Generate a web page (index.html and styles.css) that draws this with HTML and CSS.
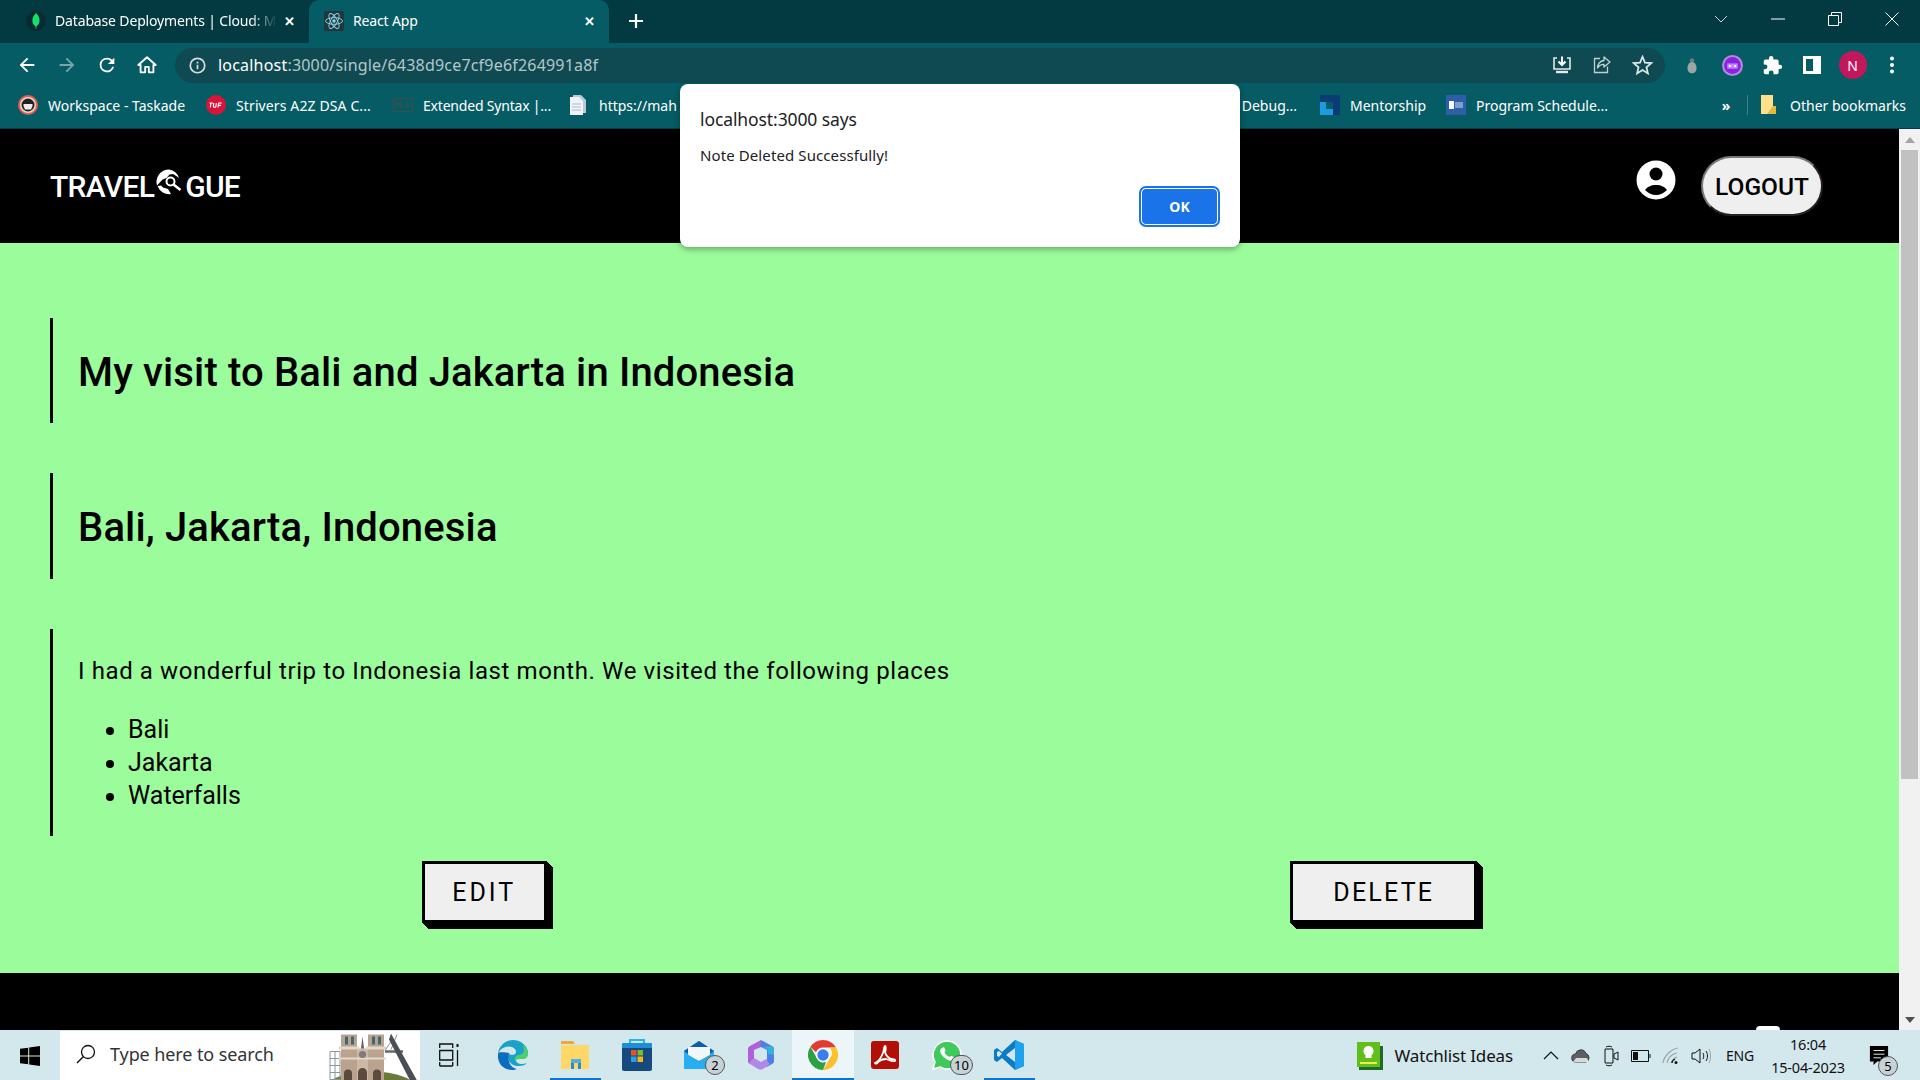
FILE: index.html
```html
<!DOCTYPE html>
<html lang="en">
<head>
<meta charset="utf-8">
<title>React App</title>
<link rel="stylesheet" href="styles.css">
</head>
<body>
<div class="screen">
  <header class="chrome">
    <div class="tabstrip">
      <div class="tab">
        <svg class="fav" viewBox="0 0 20 20"><circle cx="10" cy="10" r="10" fill="#0b2a33"/><path d="M10 2c3 3 4 6 3.400 9-.4 2-1.600 3.400-3 4.500l-.2 2.500h-.5l-.2-2.500C8 14.400 6.900 13 6.500 11 6 8 7 5 10 2z" fill="#13e26a"/></svg>
        <span class="tab-title tab-title-fade">Database Deployments | Cloud: M</span>
        <span class="tab-x">✕</span>
      </div>
      <div class="tab tab-active">
        <svg class="fav" viewBox="0 0 20 20"><rect width="20" height="20" rx="2" fill="#20373d"/><g fill="none" stroke="#8fd8ec" stroke-width=".9"><ellipse cx="10" cy="10" rx="8.500" ry="3.300"/><ellipse cx="10" cy="10" rx="8.500" ry="3.300" transform="rotate(60 10 10)"/><ellipse cx="10" cy="10" rx="8.500" ry="3.300" transform="rotate(120 10 10)"/></g><circle cx="10" cy="10" r="1.700" fill="#8fd8ec"/></svg>
        <span class="tab-title">React App</span>
        <span class="tab-x">✕</span>
      </div>
      <div class="newtab">
        <svg viewBox="0 0 16 16" width="16" height="16"><path d="M8 1v14M1 8h14" stroke="#fff" stroke-width="2.200"/></svg>
      </div>
      <div class="wincontrols">
        <span class="winbtn"><svg viewBox="0 0 14 8" width="14" height="8"><path d="M1 1l6 6 6-6" fill="none" stroke="#c9d6d8" stroke-width="1"/></svg></span>
        <span class="winbtn"><svg viewBox="0 0 14 2" width="14" height="2"><path d="M0 1h14" stroke="#fff" stroke-width="1"/></svg></span>
        <span class="winbtn"><svg viewBox="0 0 14 14" width="14" height="14"><path d="M.5 3.500h10v10H.5zM3.500 3.500v-3h10v10h-3" fill="none" stroke="#fff" stroke-width="1"/></svg></span>
        <span class="winbtn"><svg viewBox="0 0 14 14" width="14" height="14"><path d="M.5.500l13 13M13.500.500l-13 13" stroke="#fff" stroke-width="1"/></svg></span>
      </div>
    </div>
    <div class="toolbar">
      <span class="navbtn"><svg viewBox="0 0 24 24" width="22" height="22"><path d="M20 11H7.800l5.600-5.600L12 4l-8 8 8 8 1.400-1.400L7.800 13H20z" fill="#fff"/></svg></span>
      <span class="navbtn"><svg viewBox="0 0 24 24" width="22" height="22"><path d="M4 11h12.200l-5.600-5.600L12 4l8 8-8 8-1.400-1.400 5.600-5.600H4z" fill="#7fa4a8"/></svg></span>
      <span class="navbtn"><svg viewBox="0 0 24 24" width="22" height="22"><path d="M17.650 6.350A7.960 7.960 0 0 0 12 4a8 8 0 1 0 7.730 10h-2.080A6 6 0 1 1 12 6c1.660 0 3.140.690 4.220 1.780L13 11h7V4z" fill="#fff"/></svg></span>
      <span class="navbtn"><svg viewBox="0 0 24 24" width="22" height="22"><path d="M10 20v-6h4v6h5v-8h2.500L12 3.500 2.500 12H5v8z" fill="none" stroke="#fff" stroke-width="2" stroke-linejoin="round"/></svg></span>
      <div class="omnibox">
        <svg class="omni-info" viewBox="0 0 20 20" width="17" height="17"><circle cx="10" cy="10" r="8.500" fill="none" stroke="#d4dfe0" stroke-width="2"/><path d="M10 9v5.500M10 5.500v2" stroke="#d4dfe0" stroke-width="2"/></svg>
        <span class="url"><span class="url-host">localhost</span>:3000/single/6438d9ce7cf9e6f264991a8f</span>
        <span class="omni-right">
          <span class="omni-btn"><svg viewBox="0 0 20 20" width="20" height="20"><path d="M5 3H2v11h16V3h-3" fill="none" stroke="#e3e9ea" stroke-width="1.600"/><path d="M10 1.500v8M6.500 6.500l3.500 3.500 3.500-3.500" fill="none" stroke="#fff" stroke-width="2"/><path d="M4 17h12" stroke="#e3e9ea" stroke-width="2.400"/></svg></span>
          <span class="omni-btn"><svg viewBox="0 0 20 20" width="20" height="20"><path d="M8 3.500H2.500v14h13v-6" fill="none" stroke="#c3d0d2" stroke-width="1.300"/><path d="M12 2l6 5-6 5V9.300C9 9.300 7 10.500 5.500 13c.3-4 2.500-7 6.500-7.500z" fill="none" stroke="#c3d0d2" stroke-width="1.300" stroke-linejoin="round"/></svg></span>
          <span class="omni-btn"><svg viewBox="0 0 24 24" width="21" height="21"><path d="M12 17.270 18.180 21l-1.640-7.030L22 9.240l-7.190-.610L12 2 9.190 8.630 2 9.240l5.460 4.730L5.820 21z" fill="none" stroke="#dfe7e8" stroke-width="2"/></svg></span>
        </span>
      </div>
      <span class="extbtn"><svg viewBox="0 0 16 24" width="12" height="20"><circle cx="8" cy="6" r="3" fill="#6b7f80"/><path d="M8 8c4 0 6 4 6 8s-2 7-6 7-6-3-6-7 2-8 6-8z" fill="#9aa5a5"/></svg></span>
      <span class="extbtn"><svg viewBox="0 0 20 20" width="21" height="21"><circle cx="10" cy="10" r="10" fill="#b68cd8"/><circle cx="10" cy="10" r="8" fill="#8a22e0"/><path d="M5 8h10v5H5z" fill="#b98cf0"/><circle cx="7.500" cy="10.500" r="1" fill="#fff"/><circle cx="12.500" cy="10.500" r="1" fill="#fff"/></svg></span>
      <span class="extbtn"><svg viewBox="0 0 24 24" width="21" height="21"><path d="M20.500 11H19V7a2 2 0 0 0-2-2h-4V3.500a2.500 2.500 0 0 0-5 0V5H4a2 2 0 0 0-2 2v3.800h1.500a2.700 2.700 0 0 1 0 5.400H2V20a2 2 0 0 0 2 2h3.800v-1.500a2.700 2.700 0 0 1 5.400 0V22H17a2 2 0 0 0 2-2v-4h1.500a2.500 2.500 0 0 0 0-5z" fill="#fff"/></svg></span>
      <span class="extbtn"><svg viewBox="0 0 18 18" width="18" height="18"><path d="M0 0h18v18H0zM3 3v12h7V3z" fill="#fff" fill-rule="evenodd"/></svg></span>
      <span class="extbtn"><span class="profile">N</span></span>
      <span class="extbtn"><svg viewBox="0 0 4 18" width="4" height="18"><circle cx="2" cy="2.500" r="2" fill="#fff"/><circle cx="2" cy="9" r="2" fill="#fff"/><circle cx="2" cy="15.500" r="2" fill="#fff"/></svg></span>
    </div>
    <nav class="bookmarks">
      <a class="bm bm-1"><svg viewBox="0 0 20 20" width="20" height="20"><circle cx="10" cy="10" r="10" fill="#e85a5a"/><circle cx="10" cy="10" r="8" fill="#e8e0c8"/><circle cx="10" cy="10" r="6.500" fill="#222"/><path d="M5.500 9h9v2l-1.500 3.500h-6L5.500 11z" fill="#eee"/></svg><span>Workspace - Taskade</span></a>
      <a class="bm bm-2"><svg viewBox="0 0 20 20" width="20" height="20"><circle cx="10" cy="10" r="10" fill="#d8143a"/><path d="M3.500 8h3.300M5 8l-.7 4.500M7.800 8l-.4 3c0 1.800 2.400 1.800 2.600 0l.4-3M12 12.500l.7-4.500h3M12.400 10.300h2.600" stroke="#fff" stroke-width="1.200" fill="none"/></svg><span>Strivers A2Z DSA C...</span></a>
      <a class="bm bm-3"><svg viewBox="0 0 20 14" width="20" height="14"><rect x=".5" y=".5" width="19" height="13" fill="none" stroke="#3b4e50"/><path d="M3 10.500v-7l2.500 3 2.500-3v7M14 3.500v6M11.500 7.500l2.500 2.500 2.500-2.500" fill="none" stroke="#3b4e50" stroke-width="1.200"/></svg><span>Extended Syntax |...</span></a>
      <a class="bm bm-4"><svg viewBox="0 0 18 20" width="18" height="20"><path d="M4 0h8l5 5v13H4z" fill="#b8c9da"/><path d="M1 2h9l4 4v14H1z" fill="#f0f4f8"/><path d="M3 9h9M3 12h9M3 15h9" stroke="#a9bccd"/></svg><span class="bm-clip">https://maha</span></a>
      <a class="bm bm-5"><span>Debug...</span></a>
      <a class="bm bm-6"><svg viewBox="0 0 20 20" width="20" height="20"><path d="M0 0h20v20h-20z" fill="#0b3d74"/><path d="M0 7h13v13H0z" fill="#1b9ce0"/><path d="M6 7h7v7H6z" fill="#065c64"/></svg><span>Mentorship</span></a>
      <a class="bm bm-7"><svg viewBox="0 0 20 20" width="20" height="20"><rect width="20" height="20" fill="#2c5fa8"/><rect x="3" y="6" width="5" height="8" fill="#fff"/><path d="M9 8h8M9 10h8M9 12h8" stroke="#cfe0f4"/></svg><span>Program Schedule...</span></a>
      <span class="bm-more">»</span>
      <span class="bm-sep"></span>
      <a class="bm bm-8"><svg viewBox="0 0 16 20" width="16" height="20"><path d="M0 0h12v19H0z" fill="#ffe08a"/><path d="M12 11l3 0v8H6z" fill="#e5b93f"/></svg><span>Other bookmarks</span></a>
    </nav>
  </header>

  <div class="viewport">
    <main class="page">
      <div class="topnav">
        <div class="logo">
          <span>TRAVEL</span>
          <svg class="logo-mark" viewBox="0 0 26 26" width="26" height="26"><path d="M13 .500a12.500 12.500 0 0 0-12 16l5.500-6 4-1.500 3-3.500 3.500-.5 4 2.500 2 1.500A12.500 12.500 0 0 0 13 .500z" fill="#fff"/><path d="M1.500 17A12.500 12.500 0 0 0 15 25l-3-5-5-1.500-2-2z" fill="#fff"/><circle cx="14.500" cy="12.500" r="4" fill="none" stroke="#fff" stroke-width="2"/><path d="M17.500 15.500l7 5.500" stroke="#fff" stroke-width="2.600"/></svg>
          <span>GUE</span>
        </div>
        <div class="nav-right">
          <svg class="user" viewBox="0 0 40 40" width="40" height="40"><circle cx="20" cy="20" r="19.500" fill="#fff"/><circle cx="20" cy="14" r="6.500" fill="#000"/><path d="M9 30c2-3 6-5 11-5s9 2 11 5c-3 3-7 5-11 5s-8-2-11-5z" fill="#000"/></svg>
          <button class="logout">LOGOUT</button>
        </div>
      </div>
      <div class="content">
        <section class="block block-head"><h1>My visit to Bali and Jakarta in Indonesia</h1></section>
        <section class="block block-head"><h1>Bali, Jakarta, Indonesia</h1></section>
        <section class="block block-body">
          <p>I had a wonderful trip to Indonesia last month. We visited the following places</p>
          <ul>
            <li>Bali</li>
            <li>Jakarta</li>
            <li>Waterfalls</li>
          </ul>
        </section>
        <div class="actions">
          <button class="action action-edit">EDIT</button>
          <button class="action action-delete">DELETE</button>
        </div>
      </div>
      <footer class="foot"></footer>
    </main>
    <aside class="scrollbar">
      <span class="sb-arrow"><svg viewBox="0 0 10 6" width="10" height="6"><path d="M5 0l5 6H0z" fill="#a3a3a3"/></svg></span>
      <span class="sb-thumb"></span>
      <span class="sb-rest"></span>
      <span class="sb-arrow"><svg viewBox="0 0 10 6" width="10" height="6"><path d="M5 6l5-6H0z" fill="#505050"/></svg></span>
    </aside>
  </div>

  <footer class="taskbar">
    <span class="start"><svg viewBox="0 0 20 20" width="20" height="20"><path d="M0 2.800 8.200 1.700v7.800H0zM9.200 1.500 20 0v9.500H9.200zM0 10.500h8.200v7.800L0 17.200zM9.200 10.500H20V20L9.200 18.500z" fill="#000"/></svg></span>
    <div class="search">
      <svg class="search-ico" viewBox="0 0 20 20" width="20" height="20"><circle cx="12" cy="8" r="6.500" fill="none" stroke="#111" stroke-width="1.300"/><path d="M7.500 12.500 1 19" stroke="#111" stroke-width="1.500"/></svg>
      <span class="search-text">Type here to search</span>
      <svg class="search-art" viewBox="0 0 93 48" width="93" height="49">
        <ellipse cx="46" cy="58" rx="46" ry="18" fill="#6a7a3a"/>
        <g fill="none" stroke="#8a9499"><path d="M5 20h10v28H5zM5 27h10M5 34h10M5 41h10M10 20v28"/></g>
        <path d="M16 3h16v46H16zM43 3h16v46H43z" fill="#b9a38f"/>
        <path d="M32 17h11v32H32z" fill="#cbb9a6"/>
        <path d="M37.500 5 36 17h3z" fill="#6e5a4c"/>
        <path d="M14 15h20v3H14zM41 15h20v3H41zM14 26h47v2H14z" fill="#e3d8ca"/>
        <path d="M20 5h3v8h-3zM26 5h3v8h-3zM47 5h3v8h-3zM53 5h3v8h-3z" fill="#3d6a72"/>
        <circle cx="37.500" cy="23" r="3.600" fill="#7f7a80"/>
        <path d="M19 49v-7a4 4 0 0 1 8 0v7zM33 49v-8a4.500 4.500 0 0 1 9 0v8zM48 49v-7a4 4 0 0 1 8 0v7z" fill="#5b4a3e"/>
        <path d="M60 20h18" stroke="#666" stroke-width="2.500"/>
        <path d="M66 18 72 3" stroke="#8a9094" stroke-width="1" fill="none"/>
        <path d="M60 19 66 10" stroke="#8a9094" stroke-width="1"/>
        <path d="M66 2 92 49h-7L64 8z" fill="#4a4f55"/>
      </svg>
    </div>
    <div class="apps">
      <span class="app app-task"><svg viewBox="0 0 20 24" width="20" height="24"><g fill="none" stroke="#111" stroke-width="1.300"><path d="M.7 5V1h13v4M.7 19v4M13.700 19v4M.7 23h13"/><path d="M.7 7.500h13v9.500H.7z"/><path d="M18.500 7v16"/></g><path d="M17.500 1h2v3h-2z" fill="#111"/></svg></span>
      <span class="app"><svg viewBox="0 0 30 30" width="30" height="30"><path d="M15 0C7 0 .5 6.500 0 14c2-6 9-9 14-7 4 1.500 5 5 3 7-2 1.500-6 1-6-1-3 6 1 12 8 13 5 .5 8-1 10-3-5 2-11 1-11-3 0-2 3-2 7-2 3 0 5-2 5-5C30 6 23 0 15 0z" fill="#1ba3c7"/><path d="M0 14c-1 9 5 16 14 16 2 0 4-.5 5-1-6-1-10-7-8-16-1 0-11-2-11 1z" fill="#0c6cbe"/><path d="M25 4c3 3 5 7 5 10 0 3-2 5-5 5-4 0-7 0-7 2 0 1 .5 2 2 2-5-2-3-8 1-8 3-.500 5-2 5-5 0-2-1-4-1-6z" fill="#4bd16b"/></svg></span>
      <span class="app app-line"><svg viewBox="0 0 28 28" width="28" height="28"><path d="M0 0h12l2 3H0z" fill="#f0a63a"/><path d="M0 4h28v24H0z" fill="#ffd668"/><path d="M10 28V18h10v10h-3v-6h-4v6z" fill="#2a8ad0"/><path d="M10 18h10v4H10z" fill="#4fb0e8"/></svg></span>
      <span class="app"><svg viewBox="0 0 30 32" width="30" height="32"><path d="M8 4V1h14v3" fill="none" stroke="#23b8ea" stroke-width="2"/><path d="M0 6a2 2 0 0 1 2-2h26a2 2 0 0 1 2 2v24a2 2 0 0 1-2 2H2a2 2 0 0 1-2-2z" fill="#164a7e"/><path d="M0 6a2 2 0 0 1 2-2h26a2 2 0 0 1 2 2v3H0z" fill="#1d8fd6"/><path d="M9 11h5.500v5.500H9z" fill="#e8502c"/><path d="M15.500 11H21v5.500h-5.500z" fill="#7cbb2e"/><path d="M9 17.500h5.500V23H9z" fill="#2a9fe6"/><path d="M15.500 17.500H21V23h-5.500z" fill="#fcb712"/></svg></span>
      <span class="app"><svg viewBox="0 0 30 28" width="30" height="28"><path d="M0 10 15 0l15 10v18H0z" fill="#20a5ea"/><path d="M0 10 15 0l15 10-15 10z" fill="#0a5fa6"/><path d="M4 6h22v8l-11 6-11-6z" fill="#f2f6f8"/><path d="M0 11l15 10 15-10v17H0z" fill="#28aef0"/></svg><span class="pill pill-mail">2</span></span>
      <span class="app"><svg viewBox="0 0 26 30" width="26" height="30"><path d="M13 0l11 6c2 1 2 2 2 4v10c0 2 0 3-2 4l-5 3-3-4 3-3V10l-6-3-3-3z" fill="#4a80e8"/><path d="M13 0 2 6C0 7 0 8 0 10v10c0 2 0 3 2 4l3-2 1-4V10l7-3z" fill="#b060d8"/><path d="M6 18l7 4 5-3 3 4c1 1 1 1 0 2l-6 4c-2 1-3 1-5 0L2 24c-2-1 4-6 4-6z" fill="#b088e8"/><path d="M15 7l9-1c2 1 2 2 2 4v5l-6-1V10z" fill="#38b0d8"/></svg></span>
      <span class="app app-chrome"><svg viewBox="0 0 30 30" width="30" height="30"><path d="M15 0a15 15 0 0 1 13 7.500H15a7.500 7.500 0 0 0-7 4.700L2.500 6.800A15 15 0 0 1 15 0z" fill="#e33b2e"/><path d="M28 7.500A15 15 0 0 1 15 30l6.500-11.300a7.500 7.500 0 0 0 .2-11.200z" fill="#fbc02d"/><path d="M15 30A15 15 0 0 1 2.500 6.800L9 18.500a7.500 7.500 0 0 0 9 3.500L15 30z" fill="#2ea043"/><circle cx="15" cy="15" r="7" fill="#fff"/><circle cx="15" cy="15" r="5.700" fill="#3a7ff0"/></svg></span>
      <span class="app"><svg viewBox="0 0 28 28" width="28" height="28"><rect width="28" height="28" rx="3" fill="#b20f06"/><path d="M4 22c3-1 6-5 8-10 1-3 1-7 2-7s1 4 0 6c1 4 4 6 6 7 2 0 5 0 4 2-2 1-6-1-9-2-4 0-7 2-8 3-1 2-3 2-3 1z" fill="none" stroke="#fff" stroke-width="1.800"/></svg></span>
      <span class="app"><svg viewBox="0 0 30 30" width="30" height="30"><path d="M15 1a14 14 0 0 1 0 28c-2.500 0-5-.700-7-2L1 29l2-7A14 14 0 0 1 15 1z" fill="#3ecb5c" stroke="#fff" stroke-width="1.500"/><path d="M10 8c1-1 2-1 2.500 0l1 2.500c0 1-1 1.500-1 2 1 2 3 3.500 5 4.500.5 0 1-1 2-1l2.500 1c1 .500 1 1.500 0 2.500-1.500 1.500-3.500 1.500-6 .5-4-2-7-5-8-8.500 0-1.500.500-2.500 2-3.500z" fill="#fff"/></svg><span class="pill pill-wa">10</span></span>
      <span class="app app-line"><svg viewBox="0 0 30 30" width="30" height="30"><path d="M21 0l9 4v22l-9 4-13-12-5 4-3-2V10l3-2 5 4z" fill="#0a7bc4"/><path d="M21 0l9 4v22l-9 4z" fill="#1fa2ec"/><path d="M21 8v14l-9-7z" fill="#d3e8ec"/><path d="M3 12l2-1 3 2.500-3 3.500-2-1z" fill="#d3e8ec"/></svg></span>
    </div>
    <div class="tray">
      <span class="note"><svg viewBox="0 0 28 28" width="28" height="28"><path d="M4 4h24v24H4z" fill="#1f6a2a"/><path d="M2 0h23v25H2z" fill="#62be1c"/><path d="M13.500 4a5 5 0 0 1 3 9v3h-6v-3a5 5 0 0 1 3-9z" fill="#fff"/><path d="M5 20h17v2H5z" fill="#eaf04a"/></svg><span>Watchlist Ideas</span></span>
      <span class="tray-ico"><svg viewBox="0 0 16 9" width="16" height="9"><path d="M1 8l7-7 7 7" fill="none" stroke="#111" stroke-width="1.200"/></svg></span>
      <span class="tray-ico"><svg viewBox="0 0 20 14" width="20" height="14"><path d="M5 13a4 4 0 0 1-.5-8A5.500 5.500 0 0 1 15 4.500 4.500 4.500 0 0 1 15 13z" fill="#5a5f63" stroke="#3b3e40"/><path d="M2 13h16l-2-4H5z" fill="#d8d8d8"/></svg></span>
      <span class="tray-ico"><svg viewBox="0 0 16 22" width="16" height="22"><path d="M2 4h8v14H2z" fill="none" stroke="#111"/><path d="M11 9l4-2v8l-4-2z" fill="none" stroke="#111"/><path d="M3 2c2-1 4-1 6 0M3 20c2 1 4 1 6 0" stroke="#111" fill="none"/></svg></span>
      <span class="tray-ico"><svg viewBox="0 0 20 12" width="20" height="12"><path d="M.5.500h17v11H.5z" fill="none" stroke="#111"/><path d="M2 2h5v8H2z" fill="#111"/><path d="M18.500 4h1v4h-1z" fill="#111"/></svg></span>
      <span class="tray-ico"><svg viewBox="0 0 18 18" width="18" height="18"><path d="M1 16C2 9 9 2 16 1M5 16c1-5 5-9 10-10M9 16c1-3 3-5 6-6" fill="none" stroke="#9aa4a8" stroke-width="1.200"/><path d="M10 16c0-2 1-3 3-4" fill="none" stroke="#111" stroke-width="1.200"/><circle cx="14" cy="15.500" r="1.500" fill="#111"/></svg></span>
      <span class="tray-ico"><svg viewBox="0 0 20 18" width="20" height="18"><path d="M1 6h3l5-4v14l-5-4H1z" fill="none" stroke="#111"/><path d="M12 6c1 2 1 4 0 6M15 4c2 3 2 7 0 10" fill="none" stroke="#111"/><path d="M18 2c2 4 2 10 0 14" fill="none" stroke="#9aa4a8"/></svg></span>
      <span class="tray-lang">ENG</span>
      <span class="clock"><span>16:04</span><span>15-04-2023</span></span>
      <span class="notif"><svg viewBox="0 0 20 22" width="20" height="20"><path d="M0 0h20v17H8l-4 4v-4H0z" fill="#000"/><path d="M4 5h12M4 9h12M4 13h8" stroke="#fff"/></svg><span class="pill pill-notif">5</span></span>
    </div>
  </footer>

  <div class="dialog" role="alertdialog">
    <div class="dlg-title">localhost:3000 says</div>
    <div class="dlg-msg">Note Deleted Successfully!</div>
    <div class="dlg-actions"><button class="dlg-ok">OK</button></div>
  </div>
  <span class="taskbar-blob"></span>
</div>
</body>
</html>
```

FILE: styles.css
```css
* { box-sizing: border-box; }
html, body { margin: 0; padding: 0; }
body { font-family: "Noto Sans", "Liberation Sans", sans-serif; overflow: hidden; }
.screen { position: relative; width: 1920px; height: 1080px; display: flex; flex-direction: column; overflow: hidden; }

/* Browser chrome */
.chrome { flex: none; height: 129px; display: flex; flex-direction: column; background: #065c64; color: #fff; }
.tabstrip { height: 43px; display: flex; background: #033a42; padding-left: 8px; }
.tab { width: 301px; height: 43px; display: flex; align-items: center; padding: 0 0 2px 18px; font-size: 14px; letter-spacing: -.15px; }
.tab-active { width: 300px; background: #065c64; border-radius: 10px 10px 0 0; padding-left: 15px; }
.fav { width: 20px; height: 20px; flex: none; }
.tab-title { margin-left: 9px; flex: 1; white-space: nowrap; overflow: hidden; }
.tab-title-fade { -webkit-mask-image: linear-gradient(90deg, #000 88%, transparent 100%); mask-image: linear-gradient(90deg, #000 88%, transparent 100%); }
.tab-x { width: 24px; margin-right: 8px; text-align: center; font-size: 13px; font-weight: 700; flex: none; }
.newtab { width: 54px; display: flex; align-items: center; justify-content: center; padding-bottom: 2px; }
.wincontrols { margin-left: auto; display: flex; align-items: center; padding-bottom: 5px; }
.winbtn { width: 57px; height: 38px; display: flex; align-items: center; justify-content: center; }

.toolbar { height: 44px; display: flex; align-items: center; padding-left: 7px; }
.navbtn { width: 40px; display: flex; justify-content: center; flex: none; }
.omnibox { width: 1490px; height: 35px; margin-left: 8px; margin-right: 7px; display: flex; align-items: center; background: #0f4a52; border-radius: 18px; padding-left: 14px; flex: none; }
.omni-info { flex: none; }
.url { margin-left: 12px; font-size: 16px; letter-spacing: .2px; color: #b3c7c9; white-space: nowrap; }
.url-host { color: #fff; }
.omni-right { margin-left: auto; display: flex; margin-right: 3px; }
.omni-btn { width: 40px; display: flex; justify-content: center; }
.extbtn { width: 40px; display: flex; justify-content: center; align-items: center; flex: none; }
.profile { width: 28px; height: 28px; margin-left: 1px; border-radius: 50%; background: #c2185b; color: #fff; font-size: 14px; display: flex; align-items: center; justify-content: center; }

.bookmarks { height: 42px; display: flex; align-items: center; padding: 0 0 5px 18px; font-size: 14px; white-space: nowrap; border-bottom: 1px solid #0c3a40; }
.bm { display: flex; align-items: center; gap: 10px; flex: none; overflow: hidden; }
.bm svg { flex: none; }
.bm-1 { width: 188px; }
.bm-2 { width: 187px; letter-spacing: .12px; }
.bm-3 { width: 176px; letter-spacing: -.2px; }
.bm-4 { width: 400px; gap: 12px; }
.bm-clip { width: 78px; overflow: hidden; }
.bm-5 { width: 351px; justify-content: flex-end; padding-right: 23px; }
.bm-6 { width: 126px; }
.bm-7 { width: 270px; }
.bm-more { width: 20px; text-align: center; font-weight: 700; flex: none; }
.bm-sep { width: 1px; height: 20px; background: #3d8087; margin-left: 11px; margin-right: 13px; flex: none; }
.bm-8 { width: 145px; gap: 13px; }

/* Page */
.viewport { flex: none; height: 901px; display: flex; }
.page { width: 1899px; display: flex; flex-direction: column; font-family: Roboto, "Liberation Sans", sans-serif; color: #000; }
.topnav { height: 114px; background: #000; display: flex; align-items: center; justify-content: space-between; padding: 0 76px 0 50px; flex: none; }
.logo { display: flex; align-items: center; color: #fff; font-size: 30px; font-weight: 500; letter-spacing: -.7px; }
.logo-mark { margin: -9px 3px 0 2px; }
.nav-right { display: flex; align-items: center; gap: 25px; }
.user { margin-top: -12px; }
.logout { width: 122px; height: 60px; border-radius: 30px; border: 2px outset #777; background: #efefef; color: #000; font: 500 24.5px Roboto, sans-serif; padding: 0; }
.content { flex: none; height: 730px; background: #9bfc9b; padding: 75px 0 0 50px; display: flex; flex-direction: column; }
.block { border-left: 3px solid #000; padding-left: 25px; margin-bottom: 50px; }
.block-head { height: 105px; display: flex; align-items: center; padding-top: 4px; }
.block-head + .block-head { height: 106px; }
h1 { margin: 0; font-size: 40px; font-weight: 500; line-height: 1; letter-spacing: .15px; }
.block-body { height: 207px; margin-bottom: 25px; padding-top: 25px; font-size: 24px; }
.block-body p { margin: 0 0 25px; line-height: 34px; letter-spacing: .6px; }
.block-body ul { margin: 0; padding-left: 50px; line-height: 33px; font-size: 25px; }
.actions { display: flex; justify-content: space-around; margin-left: -50px; padding: 0 50px; }
.action { height: 62px; padding: 0; background: #efefef; border: 3px solid #000; color: #000; font: 400 25px Roboto, sans-serif; letter-spacing: 3px; box-shadow: 1px 1px 0 #000, 2px 2px 0 #000, 3px 3px 0 #000, 4px 4px 0 #000, 5px 5px 0 #000, 6px 6px 0 #000; }
.action-edit { width: 125px; }
.action-delete { width: 187px; letter-spacing: 2.2px; }
.foot { flex: 1; background: #000; }

.scrollbar { width: 21px; background: #f1f1f1; display: flex; flex-direction: column; align-items: center; }
.sb-arrow { height: 21px; display: flex; align-items: center; justify-content: center; flex: none; }
.sb-thumb { width: 17px; height: 629px; background: #c1c1c1; flex: none; }
.sb-rest { flex: 1; }

/* Taskbar */
.taskbar { flex: 1; display: flex; background: #d3e8ec; color: #111; }
.start { width: 60px; display: flex; align-items: center; justify-content: center; flex: none; }
.search { width: 360px; margin-top: 1px; background: #fff; display: flex; align-items: center; padding: 0 2px 3px 16px; flex: none; border-bottom: 1px solid #c8c8c8; }
.search-text { margin-left: 14px; font-size: 18px; color: #333; letter-spacing: -.1px; }
.search-art { margin-left: auto; align-self: flex-end; margin-bottom: -3px; flex: none; }
.apps { display: flex; flex: none; }
.app { position: relative; width: 62px; padding-bottom: 2px; display: flex; align-items: center; justify-content: center; }
.app-task { padding-right: 4px; }
.app-line::after, .app-chrome::after { content: ""; position: absolute; left: 6px; right: 5px; bottom: 0; height: 3px; background: #0678d4; }
.app-chrome { background: #ecf6f9; }
.app-chrome::after { left: 0; right: 0; }
.pill { position: absolute; min-width: 20px; height: 20px; border-radius: 11px; background: #c6d2d6; border: 1px solid #555; color: #000; font-size: 13px; display: flex; align-items: center; justify-content: center; }
.pill-mail { left: 37px; top: 25px; }
.pill-wa { left: 34px; top: 25px; width: 23px; }
.pill-notif { left: 20px; top: 25px; }
.tray { margin-left: auto; display: flex; align-items: center; flex: none; }
.note { display: flex; align-items: center; gap: 11px; font-size: 17px; letter-spacing: -.15px; margin-right: 23px; }
.tray-ico { width: 30px; display: flex; justify-content: center; flex: none; }
.tray-lang { margin-left: 10px; font-size: 14px; width: 44px; letter-spacing: -.2px; }
.clock { width: 74px; margin-left: 1px; font-size: 14.5px; letter-spacing: -.2px; display: flex; flex-direction: column; align-items: center; gap: 3px; line-height: 20px; }
.notif { position: relative; width: 62px; margin-left: 13px; height: 50px; display: flex; align-items: flex-start; padding: 15px 0 0 11px; flex: none; }

/* Overlays */
.dialog { position: absolute; left: 680px; top: 84px; width: 560px; height: 163px; background: #fff; border-radius: 8px; box-shadow: 0 2px 6px rgba(0,0,0,.35); padding: 23px 20px 0; color: #202124; display: flex; flex-direction: column; }
.dlg-title { font-size: 17.5px; line-height: 24px; letter-spacing: -.1px; }
.dlg-msg { margin-top: 12px; font-size: 15px; line-height: 24px; letter-spacing: .1px; }
.dlg-actions { margin-top: 21px; display: flex; justify-content: flex-end; }
.dlg-ok { width: 77px; height: 37px; margin-right: 2px; background: #1a73e8; color: #fff; border: 1px solid #fff; outline: 2px solid #1a73e8; outline-offset: 0; border-radius: 5px; font: 700 14px "Noto Sans", sans-serif; }
.taskbar-blob { position: absolute; left: 1756px; top: 1026px; width: 24px; height: 4px; background: #fff; border-radius: 4px 4px 0 0; }
```
